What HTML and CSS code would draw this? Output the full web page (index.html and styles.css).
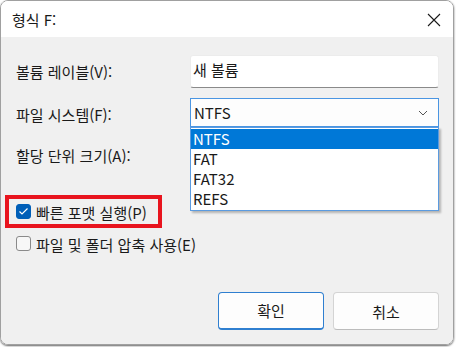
FILE: index.html
```html
<!DOCTYPE html>
<html lang="ko">
<head>
    <meta charset="UTF-8">
    <title>형식 F:</title>
    <link rel="stylesheet" href="styles.css">
</head>
<body>
    <div class="window">
        <!-- 제목 표시줄 -->
        <div class="titlebar">
            <span class="title">형식 F:</span>
            <svg class="close" width="14" height="14" viewBox="0 0 14 14">
                <path d="M1 1 L13 13 M13 1 L1 13" stroke="#1a1a1a" stroke-width="1.1" fill="none"/>
            </svg>
        </div>

        <div class="content">
            <div class="form">
                <div class="row row-label">
                    <span class="label">볼륨 레이블(V):</span>
                    <div class="input">새 볼륨</div>
                </div>
                <div class="row row-fs">
                    <span class="label">파일 시스템(F):</span>
                    <div class="select">
                        <span>NTFS</span>
                        <svg width="10" height="6" viewBox="0 0 10 6">
                            <path d="M1 1 L5 5 L9 1" stroke="#555" stroke-width="1" fill="none"/>
                        </svg>
                        <ul class="dropdown">
                            <li class="selected">NTFS</li>
                            <li>FAT</li>
                            <li>FAT32</li>
                            <li>REFS</li>
                        </ul>
                    </div>
                </div>
                <div class="row row-unit">
                    <span class="label">할당 단위 크기(A):</span>
                </div>
            </div>

            <div class="options">
                <div class="check checked">
                    <span class="box">
                        <svg width="11" height="9" viewBox="0 0 11 9">
                            <path d="M1.5 4.5 L4 7 L9.5 1.5" stroke="#fff" stroke-width="1.2" fill="none"/>
                        </svg>
                    </span>
                    <span>빠른 포맷 실행(P)</span>
                    <span class="mark"></span>
                </div>
                <div class="check">
                    <span class="box"></span>
                    <span>파일 및 폴더 압축 사용(E)</span>
                </div>
            </div>

            <div class="buttons">
                <button class="btn primary">확인</button>
                <button class="btn">취소</button>
            </div>
        </div>
    </div>
</body>
</html>
```

FILE: styles.css
```css
* {
    margin: 0;
    padding: 0;
    box-sizing: border-box;
}

body {
    background-color: #ffffff;
    font-family: "Noto Sans CJK KR", "Noto Sans", sans-serif;
    font-size: 15px;
    line-height: 20px;
    color: #1a1a1a;
    width: 456px;
    height: 347px;
    overflow: hidden;
}

/* 창 */
.window {
    width: 454px;
    height: 345px;
    border: 1px solid #a0a0a0;
    border-radius: 8px;
    overflow: hidden;
    display: flex;
    flex-direction: column;
    box-shadow: 0 1px 2px rgba(0, 0, 0, 0.6);
}

.titlebar {
    height: 36px;
    background-color: #ffffff;
    display: flex;
    align-items: center;
    justify-content: space-between;
    padding: 0 12px 0 11px;
    flex-shrink: 0;
}

.title {
    padding-top: 1px;
}

.close {
    margin-top: 1px;
}

.content {
    flex: 1;
    background-color: #f0f0f0;
    padding: 18px 14px 14px 15px;
    display: flex;
    flex-direction: column;
}

/* 입력 행 */
.row {
    display: flex;
    align-items: center;
}

.label {
    width: 174px;
    flex-shrink: 0;
}

.row-label {
    height: 33px;
}

.row-fs {
    height: 29px;
    margin-top: 10px;
}

.row-fs .label {
    padding-top: 4px;
}

.row-unit {
    height: 29px;
    margin-top: 14px;
}

.input {
    flex: 1;
    height: 33px;
    background-color: #ffffff;
    border: 1px solid #ececec;
    border-bottom: 1px solid #8a8a8a;
    border-radius: 3px;
    padding: 0 0 3px 2px;
    display: flex;
    align-items: center;
}

.select {
    flex: 1;
    height: 29px;
    background-color: #fdfdfd;
    border: 1px solid #4a95e2;
    padding: 0 10px 0 3px;
    display: flex;
    align-items: center;
    justify-content: space-between;
    position: relative;
}

.dropdown {
    list-style: none;
    position: absolute;
    left: -1px;
    right: -1px;
    top: 28px;
    background-color: #ffffff;
    border: 1px solid #5b9be0;
    box-shadow: 2px 2px 2px rgba(0, 0, 0, 0.25);
    padding: 1px 0;
    z-index: 2;
}

.dropdown li {
    height: 20px;
    line-height: 20px;
    padding-left: 2px;
}

.dropdown li.selected {
    background-color: #0078d7;
    color: #ffffff;
}

/* 체크박스 */
.options {
    margin-top: 31px;
    display: flex;
    flex-direction: column;
    gap: 12px;
}

.check {
    height: 20px;
    display: flex;
    align-items: center;
    gap: 5px;
    position: relative;
}

.check > span:nth-child(2) {
    padding-top: 3px;
}

.box {
    width: 15px;
    height: 15px;
    border: 1px solid #8a8a8a;
    border-radius: 3px;
    background-color: #f7f7f7;
    display: flex;
    align-items: center;
    justify-content: center;
}

.check.checked .box {
    background-color: #005fb8;
    border-color: #005fb8;
}

.mark {
    position: absolute;
    left: -11px;
    top: -6px;
    width: 157px;
    height: 33px;
    border: 4px solid #e8141e;
}

/* 버튼 */
.buttons {
    margin-top: auto;
    display: flex;
    justify-content: flex-end;
    gap: 9px;
}

.btn {
    width: 106px;
    height: 38px;
    font-family: inherit;
    font-size: 15px;
    color: #1a1a1a;
    background-color: #fdfdfd;
    border: 1px solid #d4d4d4;
    border-bottom-color: #bcbcbc;
    border-radius: 4px;
}

.btn.primary {
    border: 1px solid #2f7fd0;
    border-bottom-width: 2px;
}
```
